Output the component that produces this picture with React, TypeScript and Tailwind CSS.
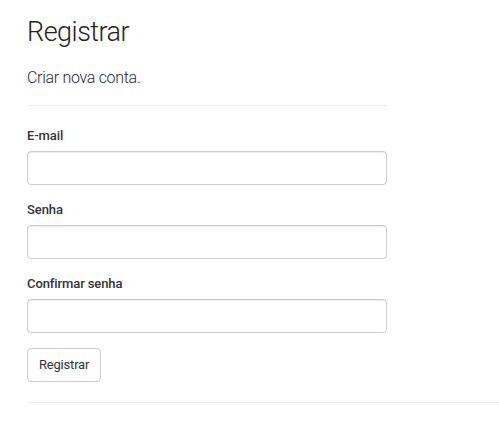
import React from "react";

const font = {
  fontFamily: 'Roboto, "Noto Sans", sans-serif',
};

function Field({ label, type }: { label: string; type: string }) {
  return (
    <div className="mb-[15px]">
      <label className="mb-[5px] block text-[13px] font-medium leading-[20px] tracking-[-0.1px] text-[#333]">
        {label}
      </label>
      <input
        type={type}
        className="block h-[34px] w-[360px] rounded-[4px] border border-[#ccc] bg-white px-3 shadow-[inset_0_1px_1px_rgba(0,0,0,0.075)]"
      />
    </div>
  );
}

export default function App() {
  return (
    <div className="min-h-[433px] bg-white text-[#333]" style={font}>
      <div className="pl-[27px] pt-[14px]">
        <h2 className="text-[27px] font-light leading-[36px] tracking-[-0.5px] text-[#222]">
          Registrar
        </h2>
        <h4 className="mt-[18px] text-[16px] font-light leading-[20px] tracking-[-0.3px] text-[#2b2b2b]">
          Criar nova conta.
        </h4>
        <hr className="mt-[17px] mb-[20px] w-[360px] border-t border-[#eee]" />
        <form>
          <Field label="E-mail" type="email" />
          <Field label="Senha" type="password" />
          <Field label="Confirmar senha" type="password" />
          <button
            type="button"
            className="h-[34px] rounded-[4px] border border-[#ccc] bg-white px-[11px] text-[13px] tracking-[-0.2px] text-[#333]"
          >
            Registrar
          </button>
        </form>
        <hr className="mt-[20px] border-t border-[#eee]" />
      </div>
    </div>
  );
}
